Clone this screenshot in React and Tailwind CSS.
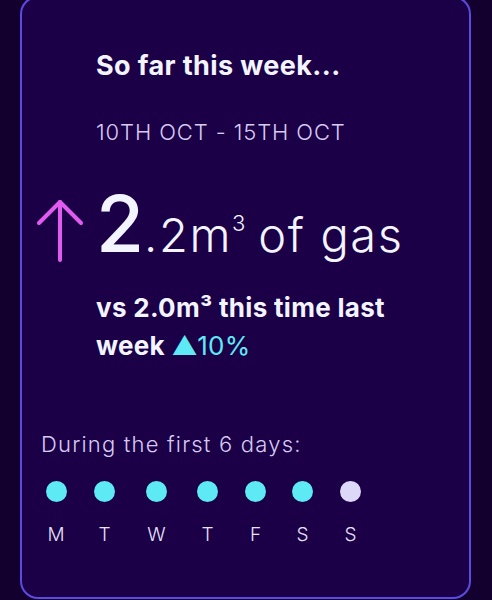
import React from "react";

const days = [
  { l: "M", c: "bg-[#5eeaf4]" },
  { l: "T", c: "bg-[#5eeaf4]" },
  { l: "W", c: "bg-[#5eeaf4]" },
  { l: "T", c: "bg-[#5eeaf4]" },
  { l: "F", c: "bg-[#5eeaf4]" },
  { l: "S", c: "bg-[#5eeaf4]" },
  { l: "S", c: "bg-[#ddd8f8]" },
];

export default function App() {
  return (
    <div className="w-[492px] h-[600px] bg-[#13002e] pl-[20px] overflow-hidden font-[Inter,sans-serif]">
      <div className="w-[451px] h-[603px] -mt-[4px] border-2 border-[#5c4be2] rounded-[18px] bg-[#1c0047] flex flex-col">
        <div className="pl-[74px] pt-[52px]">
          <div className="text-[27px] leading-[32px] font-bold text-[#f2f5ff] tracking-[0.4px]">So far this week...</div>
          <div className="mt-[36px] text-[22px] leading-[28px] font-light text-[#d6ccf2] tracking-[0.9px]">10TH OCT - 15TH OCT</div>
        </div>
        <div className="flex items-start pl-[14px] mt-[43px] h-[70px]">
          <svg className="mt-[10px] shrink-0" width="48" height="64" viewBox="0 0 48 64" fill="none" stroke="#e15bf0" strokeWidth="4" strokeLinecap="round" strokeLinejoin="round">
            <path d="M24 3 V61" />
            <path d="M3 24 L24 3 L45 24" />
          </svg>
          <div className="ml-[12px] flex items-baseline text-[#f2f5ff] font-light">
            <span className="text-[78px] leading-[70px] font-medium">2</span>
            <span className="text-[47px] leading-[50px] tracking-[1.6px]">.2m</span>
            <span className="text-[22px] relative -top-[21px]">3</span>
            <span className="text-[47px] leading-[50px] ml-[13px] tracking-[1.6px]">of gas</span>
          </div>
        </div>
        <div className="pl-[74px] mt-[30px] text-[26px] leading-[38px] font-bold text-[#f2f5ff] tracking-[0.3px]">
          <div>vs 2.0m³ this time last</div>
          <div>
            week <span className="font-normal text-[#5eeaf4]">▲10%</span>
          </div>
        </div>
        <div className="pl-[19px] mt-[65px] text-[22px] leading-[28px] font-light text-[#d6ccf2] tracking-[1.2px]">During the first 6 days:</div>
        <div className="grid grid-cols-[48px_49px_55px_47px_49px_45px_51px] ml-[10px] mt-[23px]">
          {days.map((d, i) => (
            <div key={i} className="flex flex-col items-center">
              <div className={"w-[21px] h-[21px] rounded-full " + d.c}></div>
              <div className="mt-[21px] text-[19px] leading-[24px] font-light text-[#e6e2f8]">{d.l}</div>
            </div>
          ))}
        </div>
      </div>
    </div>
  );
}
